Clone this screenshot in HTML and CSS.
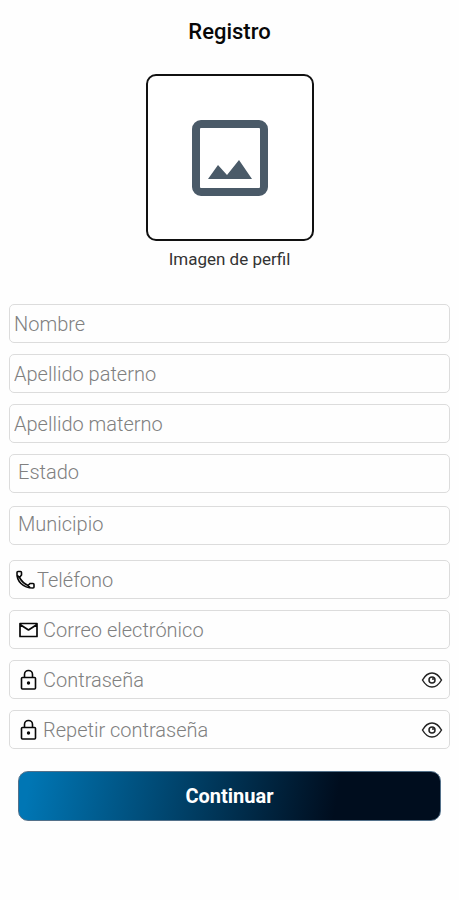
FILE: index.html
```html
<!DOCTYPE html>
<html lang="es">
<head>
<meta charset="utf-8">
<meta name="viewport" content="width=device-width, initial-scale=1">
<title>Registro</title>
<link rel="stylesheet" href="styles.css">
</head>
<body>
<svg class="sprite" aria-hidden="true">
  <symbol id="lock" viewBox="0 0 22 22"><g fill="none" stroke="currentColor" stroke-width="1.600"><rect x="3.500" y="8.500" width="14" height="11.500" rx="1"/><path d="M6.500 8.500V5.500a4 4 0 0 1 8 0V8.500"/></g><circle cx="10.500" cy="14" r="1.700"/></symbol>
  <symbol id="eye" viewBox="0 0 22 18"><path d="M1.500 9Q5.500 2 11 2T20.500 9Q16.500 16 11 16T1.500 9Z" fill="none" stroke="currentColor" stroke-width="1.500"/><circle cx="11" cy="9" r="3" fill="none" stroke="currentColor" stroke-width="1.500"/><circle cx="12" cy="8" r="1"/></symbol>
</svg>
<main class="page">
  <h1 class="title">Registro</h1>
  <button class="photo" type="button" aria-labelledby="photo-caption">
    <svg class="photo-icon" viewBox="0 0 76 76" aria-hidden="true">
      <rect x="4" y="4" width="68" height="68" rx="5" fill="none" stroke="currentColor" stroke-width="8"/>
      <path d="M16 59L26 45L35 55L47 40L60 59Z"/>
    </svg>
  </button>
  <p class="caption" id="photo-caption">Imagen de perfil</p>
  <form class="form">
    <div class="group">
      <label class="field"><input type="text" placeholder="Nombre" aria-label="Nombre"></label>
      <label class="field"><input type="text" placeholder="Apellido paterno" aria-label="Apellido paterno"></label>
      <label class="field"><input type="text" placeholder="Apellido materno" aria-label="Apellido materno"></label>
    </div>
    <div class="group place">
      <label class="field"><input type="text" placeholder="Estado" aria-label="Estado"></label>
      <label class="field"><input type="text" placeholder="Municipio" aria-label="Municipio"></label>
    </div>
    <div class="group contact">
      <label class="field phone">
        <svg class="icon" viewBox="0 0 22 22" aria-hidden="true"><path d="M2 3.500Q2 2.500 3 2.500H5.500Q6.500 2.500 6.500 3.500V6L4.500 8.500Q7.500 14 13 16.500L15 14.500H18Q19 14.500 19 15.500V18Q19 19 18 19Q10.500 19 6 14.500T2 3.500ZM2.500 6.500L4.500 8.500M13 16.500L15 18.500" fill="none" stroke="currentColor" stroke-width="1.600"/></svg>
        <input type="tel" placeholder="Teléfono" aria-label="Teléfono">
      </label>
      <label class="field mail">
        <svg class="icon" viewBox="0 0 22 22" aria-hidden="true"><path d="M2 4.500H19V17.500H2ZM2 5.500L10.500 11L19 5.500" fill="none" stroke="currentColor" stroke-width="1.700" stroke-linejoin="round"/></svg>
        <input type="email" placeholder="Correo electrónico" aria-label="Correo electrónico">
      </label>
      <div class="field mail">
        <svg class="icon" aria-hidden="true"><use href="#lock"/></svg>
        <input type="password" placeholder="Contraseña" aria-label="Contraseña">
        <button class="reveal" type="button" aria-label="Mostrar contraseña"><svg class="eye" aria-hidden="true"><use href="#eye"/></svg></button>
      </div>
      <div class="field mail">
        <svg class="icon" aria-hidden="true"><use href="#lock"/></svg>
        <input type="password" placeholder="Repetir contraseña" aria-label="Repetir contraseña">
        <button class="reveal" type="button" aria-label="Mostrar contraseña repetida"><svg class="eye" aria-hidden="true"><use href="#eye"/></svg></button>
      </div>
    </div>
    <button class="submit" type="submit">Continuar</button>
  </form>
</main>
</body>
</html>
```
FILE: styles.css
```css
* {
  box-sizing: border-box;
}

body {
  margin: 0;
  background: #fefefe;
  color: #080808;
  font-family: Roboto, "Liberation Sans", sans-serif;
}

svg {
  fill: currentColor;
}

.sprite {
  position: absolute;
  width: 0;
  height: 0;
}

.page {
  display: flex;
  flex-direction: column;
  align-items: center;
  padding: 20px 9px;
}

.title {
  margin: 0 0 30px;
  font-size: 22px;
  line-height: 24px;
  font-weight: 500;
}

.photo {
  display: flex;
  align-items: center;
  justify-content: center;
  width: 168px;
  height: 167px;
  padding: 0;
  border: 2px solid #111;
  border-radius: 10px;
  background: #fff;
  color: #4a5a68;
}

.photo-icon {
  width: 76px;
  height: 76px;
}

.caption {
  margin: 6px 0 33px;
  color: #333;
  font-size: 17px;
  line-height: 24px;
}

.form {
  align-self: stretch;
}

.group {
  display: grid;
  gap: 11px;
}

.place {
  gap: 13px;
  margin-top: 11px;
}

.contact {
  margin-top: 15px;
}

.field {
  display: flex;
  align-items: center;
  height: 39px;
  padding: 0 6px 0 4px;
  border: 1px solid #dcdcdc;
  border-radius: 5px;
}

.place .field {
  padding: 0 8px 4px;
}

.phone {
  padding-left: 5px;
}

.mail {
  gap: 3px;
  padding-left: 8px;
}

.field input {
  flex: 1;
  min-width: 0;
  padding: 0;
  border: 0;
  outline: 0;
  background: none;
  color: #111;
  font: 300 20px/24px Roboto, "Liberation Sans", sans-serif;
}

.field input::placeholder {
  color: #808080;
  opacity: 1;
}

.icon {
  flex: none;
  width: 22px;
  height: 22px;
}

.reveal {
  display: flex;
  padding: 0;
  border: 0;
  background: none;
  color: #222;
}

.eye {
  width: 22px;
  height: 18px;
}

.submit {
  display: block;
  width: calc(100% - 18px);
  height: 50px;
  margin: 22px 9px 0;
  padding: 0;
  border: 1px solid #54718a;
  border-radius: 10px;
  background: linear-gradient(100deg, #0076b4 3%, #000d1e 75%) border-box;
  color: #fff;
  font: 700 20px/24px Roboto, "Liberation Sans", sans-serif;
}
```
